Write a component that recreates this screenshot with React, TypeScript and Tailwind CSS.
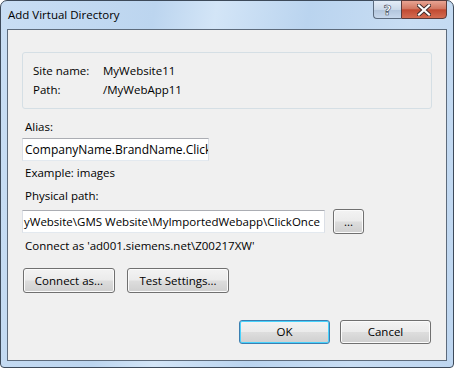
import React from 'react';

const font = { fontFamily: '"Segoe UI", "Open Sans", "Noto Sans", sans-serif' };

const Button: React.FC<{ label: string; w: string; h?: string; primary?: boolean }> = ({ label, w, h = 'h-[24px]', primary }) => {
  return (
    <div
      className={`${w} ${h} flex items-center justify-center rounded-[3px] border text-[11.5px] text-black bg-[linear-gradient(to_bottom,#f3f3f3_0%,#ebebeb_48%,#dddddd_52%,#cfcfcf_100%)] ${
        primary ? 'border-[#3c7fb1] shadow-[inset_0_0_0_1px_#48d2fc]' : 'border-[#707070] shadow-[inset_0_0_0_1px_#fbfbfb]'
      }`}
    >
      {label}
    </div>
  );
};

const App: React.FC = () => {
  return (
    <div className="w-[454px] h-[368px] bg-white" style={font}>
      {/* Window frame */}
      <div className="w-[454px] h-[368px] flex flex-col border border-[#3d4a5a] rounded-t-[7px] rounded-b-[4px] bg-[linear-gradient(100deg,#c9def4_0%,#bcd5ef_30%,#d3e5f7_42%,#bad4ef_60%,#c8ddf3_80%,#bed6f0_100%)]">
        {/* Title bar */}
        <div className="h-[28px] flex justify-between items-start">
          <div className="pl-[7px] pt-[6px] text-[11.5px] leading-[16px] text-black">Add Virtual Directory</div>
          <div className="flex mr-[6px] -mt-px">
            <div className="w-[28px] h-[19px] flex items-center justify-center border border-[#5b6b7e] border-r-0 rounded-bl-[4px] bg-[linear-gradient(to_bottom,#e4edf7_0%,#cbd9e9_50%,#b2c5dc_52%,#c7d8ec_100%)]">
              <span
                className="text-[14px] font-bold leading-none text-white"
                style={{ fontFamily: '"DejaVu Sans", sans-serif', WebkitTextStroke: '0.6px #3b4656' }}
              >
                ?
              </span>
            </div>
            <div className="w-[46px] h-[19px] flex items-center justify-center border border-[#5b3b3b] rounded-br-[4px] bg-[linear-gradient(to_bottom,#e8a493_0%,#d27762_45%,#c14a32_52%,#d46c52_100%)]">
              <svg width="14" height="12" viewBox="0 0 14 12">
                <path d="M2 1.5 L12 10.5 M12 1.5 L2 10.5" stroke="#3d2a2a" strokeWidth="4" strokeLinecap="square" />
                <path d="M2 1.5 L12 10.5 M12 1.5 L2 10.5" stroke="#ffffff" strokeWidth="2.2" strokeLinecap="square" />
              </svg>
            </div>
          </div>
        </div>

        {/* Client area */}
        <div className="mx-[6px] h-[332px] border border-[#5d6b7c] bg-[#f0f0f0] px-[14px] text-[11.5px] text-black">
          {/* Info box */}
          <div className="mt-[22px] h-[57px] rounded-[3px] border border-[#d5dfe5] py-[8px] px-[10px] leading-[19px]">
            <div className="flex">
              <span className="w-[70px]">Site name:</span>
              <span>MyWebsite11</span>
            </div>
            <div className="flex">
              <span className="w-[70px]">Path:</span>
              <span>/MyWebApp11</span>
            </div>
          </div>

          {/* Alias */}
          <div className="mt-[10px] pl-[3px] leading-[16px]">Alias:</div>
          <div className="mt-[3px] w-[187px] h-[23px] border border-[#abadb3] border-l-[#dbdfe6] border-r-[#dbdfe6] border-b-[#e3e9ef] bg-white pl-[2px] leading-[21px] overflow-hidden whitespace-nowrap text-[12px]">
            CompanyName.BrandName.ClickOnce
          </div>
          <div className="mt-[4px] pl-[3px] leading-[16px]">Example: images</div>

          {/* Physical path */}
          <div className="mt-[7px] pl-[3px] leading-[16px]">Physical path:</div>
          <div className="mt-[5px] flex items-start">
            <div className="w-[303px] h-[23px] mt-px border border-[#abadb3] border-l-[#dbdfe6] border-r-[#dbdfe6] border-b-[#e3e9ef] bg-white pl-[1px] leading-[21px] overflow-hidden whitespace-nowrap">
              yWebsite\GMS Website\MyImportedWebapp\ClickOnce
            </div>
            <div className="ml-[8px]">
              <Button label="..." w="w-[31px]" h="h-[25px]" />
            </div>
          </div>
          <div className="mt-[4px] pl-[3px] leading-[16px]">Connect as 'ad001.siemens.net\Z00217XW'</div>

          {/* Connect / test */}
          <div className="mt-[14px] flex gap-[12px] pl-[1px]">
            <Button label="Connect as..." w="w-[92px]" h="h-[25px]" />
            <Button label="Test Settings..." w="w-[102px]" h="h-[25px]" />
          </div>

          {/* OK / Cancel */}
          <div className="mt-[27px] flex justify-end gap-[10px] pr-[1px]">
            <Button label="OK" w="w-[91px]" h="h-[24px]" primary />
            <Button label="Cancel" w="w-[91px]" h="h-[24px]" />
          </div>
        </div>
      </div>
    </div>
  );
};

export default App;
